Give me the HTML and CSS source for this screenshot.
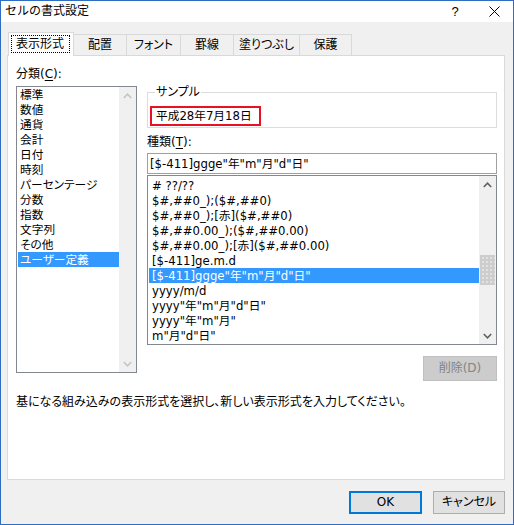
FILE: index.html
```html
<!DOCTYPE html>
<html lang="ja">
<head>
<meta charset="utf-8">
<title>セルの書式設定</title>
<link rel="stylesheet" href="styles.css">
</head>
<body>
<div class="window">
  <div class="titlebar">
    <span class="title">セルの書式設定</span>
    <span class="help">?</span>
    <span class="close"><svg width="11" height="11" viewBox="0 0 11 11"><path d="M0.5 0.5 L10.5 10.5 M10.5 0.5 L0.5 10.5" stroke="#000" stroke-width="1" fill="none"/></svg></span>
  </div>
  <div class="body">
    <div class="tabs">
      <div class="tab selected"><span class="focus">表示形式</span></div>
      <div class="tab w53">配置</div>
      <div class="tab w54">フォント</div>
      <div class="tab w53">罫線</div>
      <div class="tab w66">塗りつぶし</div>
      <div class="tab w52">保護</div>
    </div>
    <div class="page">
      <div class="cols">
        <div class="leftcol">
          <div class="label">分類(<u>C</u>):</div>
          <div class="listbox catlist">
            <ul class="items">
              <li>標準</li>
              <li>数値</li>
              <li>通貨</li>
              <li>会計</li>
              <li>日付</li>
              <li>時刻</li>
              <li>パーセンテージ</li>
              <li>分数</li>
              <li>指数</li>
              <li>文字列</li>
              <li>その他</li>
              <li class="sel">ユーザー定義</li>
            </ul>
            <div class="scrollbar disabled">
              <span class="arrow"><svg width="9" height="6" viewBox="0 0 9 6"><path d="M0.8 5 L4.5 1.2 L8.2 5" stroke="currentColor" stroke-width="1.6" fill="none"/></svg></span>
              <span class="track"></span>
              <span class="arrow"><svg width="9" height="6" viewBox="0 0 9 6"><path d="M0.8 1 L4.5 4.8 L8.2 1" stroke="currentColor" stroke-width="1.6" fill="none"/></svg></span>
            </div>
          </div>
        </div>
        <div class="rightcol">
          <fieldset class="sample">
            <legend>サンプル</legend>
            <div class="samplebox">平成28年7月18日</div>
          </fieldset>
          <div class="label kind">種類(<u>T</u>):</div>
          <div class="textbox">[$-411]ggge"年"m"月"d"日"</div>
          <div class="listbox fmtlist">
            <ul class="items">
              <li># ??/??</li>
              <li>$#,##0_);($#,##0)</li>
              <li>$#,##0_);[赤]($#,##0)</li>
              <li>$#,##0.00_);($#,##0.00)</li>
              <li>$#,##0.00_);[赤]($#,##0.00)</li>
              <li>[$-411]ge.m.d</li>
              <li class="sel">[$-411]ggge"年"m"月"d"日"</li>
              <li>yyyy/m/d</li>
              <li>yyyy"年"m"月"d"日"</li>
              <li>yyyy"年"m"月"</li>
              <li>m"月"d"日"</li>
            </ul>
            <div class="scrollbar">
              <span class="arrow"><svg width="9" height="6" viewBox="0 0 9 6"><path d="M0.8 5 L4.5 1.2 L8.2 5" stroke="currentColor" stroke-width="1.6" fill="none"/></svg></span>
              <span class="track t1"></span>
              <span class="thumb"></span>
              <span class="track t2"></span>
              <span class="arrow"><svg width="9" height="6" viewBox="0 0 9 6"><path d="M0.8 1 L4.5 4.8 L8.2 1" stroke="currentColor" stroke-width="1.6" fill="none"/></svg></span>
            </div>
          </div>
          <div class="delrow"><button class="btn del" disabled>削除(D)</button></div>
        </div>
      </div>
      <p class="desc">基になる組み込みの表示形式を選択し、新しい表示形式を入力してください。</p>
    </div>
    <div class="buttons">
      <button class="btn ok">OK</button>
      <button class="btn cancel">キャンセル</button>
    </div>
  </div>
</div>
</body>
</html>
```
FILE: styles.css
```css
* { box-sizing: border-box; }
html, body { margin: 0; padding: 0; }
body {
  width: 514px;
  height: 525px;
  font-family: "DejaVu Sans", "Noto Sans CJK JP", sans-serif;
  font-size: 12px;
  font-feature-settings: "palt";
  color: #000;
  background: #fff;
}
.window {
  width: 514px;
  height: 525px;
  border: 1px solid #2f6dc2;
  background: #f0f0f0;
  display: flex;
  flex-direction: column;
}
.titlebar {
  height: 21px;
  background: #fff;
  display: flex;
  align-items: center;
}
.title {
  flex: 1;
  padding-left: 4px;
  font-size: 12px;
  line-height: 21px;
  font-feature-settings: normal;
}
.help {
  width: 40px;
  text-align: center;
  font-family: "Liberation Sans", sans-serif;
  font-size: 13px;
}
.close {
  width: 38px;
  display: flex;
  justify-content: center;
  align-items: center;
}
.body {
  flex: 1;
  padding: 10px 8px 0 6px;
  display: flex;
  flex-direction: column;
}
.tabs {
  display: flex;
  align-items: flex-end;
  height: 23px;
  padding-left: 1px;
  position: relative;
  z-index: 1;
}
.tab {
  height: 21px;
  border: 1px solid #d9d9d9;
  border-left: none;
  border-bottom: none;
  background: #f0f0f0;
  display: flex;
  align-items: center;
  justify-content: center;
  line-height: 14px;
}
.tab.selected {
  width: 66px;
  height: 24px;
  margin-bottom: -1px;
  border-left: 1px solid #d9d9d9;
  background: #fff;
  padding-bottom: 1px;
}
.focus {
  border: 1px dotted #000;
  width: 59px;
  height: 18px;
  display: flex;
  align-items: center;
  justify-content: center;
  margin-left: -2px;
}
.w52 { width: 52px; }
.w53 { width: 53px; }
.w54 { width: 54px; }
.w66 { width: 66px; }
.page {
  height: 425px;
  border: 1px solid #d9d9d9;
  background: #fff;
  padding: 11px 6px 0 8px;
}
.cols {
  display: flex;
  gap: 10px;
  align-items: flex-start;
}
.leftcol { width: 121px; }
.rightcol {
  width: 350px;
  padding-top: 18px;
}
.label {
  line-height: 14px;
  height: 14px;
}
.label u { text-underline-offset: 2px; }
.listbox {
  border: 1px solid #828790;
  background: #fff;
  display: flex;
  overflow: hidden;
}
.catlist {
  margin-top: 5px;
  height: 287px;
}
.items {
  list-style: none;
  margin: 0;
  padding: 0;
  flex: 1;
  overflow: hidden;
  font-size: 11.7px;
}
.items li {
  line-height: 14px;
  height: 15px;
  padding-top: 1px;
  margin-left: 1px;
  padding-left: 2px;
  white-space: nowrap;
}
.items li.sel {
  background: #3399ff;
  color: #fff;
}
.fmtlist .items { padding-top: 2px; }
.fmtlist .items li { padding-left: 3px; }
.scrollbar {
  width: 17px;
  background: #f0f0f0;
  display: flex;
  flex-direction: column;
  color: #606060;
}
.scrollbar.disabled { color: #c4c4c4; }
.arrow {
  height: 17px;
  flex: none;
  display: flex;
  align-items: center;
  justify-content: center;
}
.track { flex: 1; }
.fmtlist .t1 { flex: 62; }
.fmtlist .t2 { flex: 42; }
.thumb {
  height: 30px;
  flex: none;
  margin: 0 1px;
  background-color: #cdcdcd;
  background-image: radial-gradient(circle, #e2e2e2 0.7px, transparent 0.9px);
  background-size: 4px 4px;
  background-position: 1px 1px;
}
.fmtlist {
  margin-top: 1px;
  height: 170px;
}
fieldset.sample {
  margin: 0;
  padding: 0 2px 1px 2px;
  border: 1px solid #dcdcdc;
  min-width: 0;
}
.sample legend {
  margin-left: 5px;
  padding: 0 1px;
  line-height: 14px;
}
.samplebox {
  margin-top: 7px;
  width: 111px;
  height: 20px;
  border: 2px solid #e81123;
  padding-left: 4px;
  line-height: 17px;
  font-size: 11.7px;
  white-space: nowrap;
}
.kind { margin-top: 7px; }
.textbox {
  margin-top: 4px;
  height: 21px;
  border: 1px solid #a0a0a0;
  padding-left: 2px;
  line-height: 20px;
  font-size: 11.7px;
  white-space: nowrap;
}
.delrow {
  display: flex;
  justify-content: flex-end;
  margin-top: 11px;
}
.btn {
  font-family: inherit;
  font-size: 12px;
  font-feature-settings: "palt";
  padding: 0;
  height: 23px;
  line-height: 19px;
}
.del {
  width: 74px;
  height: 25px;
  background: #cccccc;
  border: 1px solid #bfbfbf;
  color: #838383;
}
.desc {
  margin: 14px 0 0 0;
  line-height: 14px;
}
.buttons {
  display: flex;
  justify-content: flex-end;
  gap: 11px;
  margin-top: 11px;
}
.ok {
  width: 73px;
  background: #e1e1e1;
  border: 2px solid #0078d7;
  color: #000;
}
.cancel {
  width: 72px;
  background: #e1e1e1;
  border: 1px solid #adadad;
  color: #000;
}
```
